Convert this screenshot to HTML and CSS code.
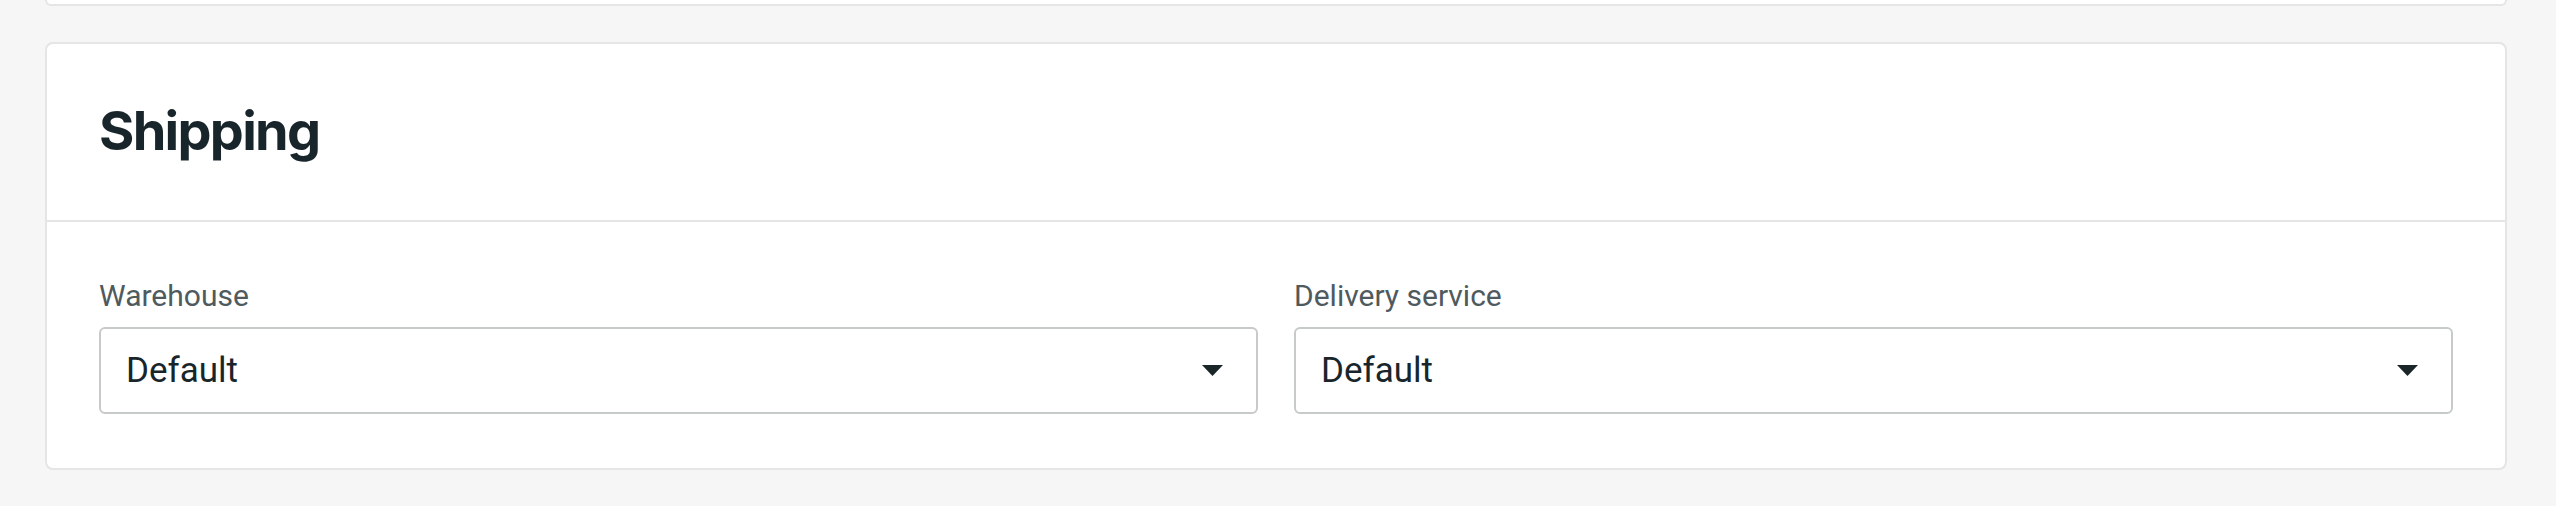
FILE: index.html
```html
<!DOCTYPE html>
<html lang="en">
<head>
    <meta charset="UTF-8">
    <meta name="viewport" content="width=device-width, initial-scale=1.0">
    <title>Shipping</title>
    <link rel="stylesheet" href="styles.css">
</head>
<body>
    <div class="page">
        <div class="card card-tail"></div>

        <div class="card">
            <div class="card-header">
                <h2>Shipping</h2>
            </div>
            <div class="card-content">
                <div class="field">
                    <label>Warehouse</label>
                    <div class="select">
                        <span>Default</span>
                        <svg class="arrow" width="21" height="11" viewBox="0 0 21 11"><path d="M0 0H21L10.5 11Z"/></svg>
                    </div>
                </div>
                <div class="field">
                    <label>Delivery service</label>
                    <div class="select">
                        <span>Default</span>
                        <svg class="arrow" width="21" height="11" viewBox="0 0 21 11"><path d="M0 0H21L10.5 11Z"/></svg>
                    </div>
                </div>
            </div>
        </div>
    </div>
</body>
</html>
```

FILE: styles.css
```css
body {
    margin: 0;
    background: #f6f6f6;
    font-family: Roboto, "Noto Sans", sans-serif;
}
.page {
    padding: 0 49px 0 45px;
}
.card {
    background: #fff;
    border: 2px solid #e5e5e5;
    border-radius: 8px;
}
.card-tail {
    height: 4px;
    border-top: 0;
    border-radius: 0 0 8px 8px;
    margin-bottom: 36px;
}
.card-header {
    height: 172px;
    padding: 0 52px 4px;
    display: flex;
    align-items: center;
    border-bottom: 2px solid #e5e5e5;
}
.card-header h2 {
    margin: 0;
    font-family: Inter, sans-serif;
    font-size: 54px;
    font-weight: 700;
    letter-spacing: -1.7px;
    color: #18262b;
}
.card-content {
    padding: 51px 52px 54px;
    display: grid;
    grid-template-columns: 1fr 1fr;
    gap: 36px;
}
.field label {
    display: block;
    font-size: 30px;
    line-height: 45px;
    color: #4f5a5e;
    margin-bottom: 9px;
}
.select {
    height: 83px;
    border: 2px solid #c6cbc9;
    border-radius: 6px;
    padding: 0 33px 0 25px;
    display: flex;
    align-items: center;
    justify-content: space-between;
    font-size: 35px;
    color: #18262b;
}
.arrow {
    fill: #1b2629;
}
```
